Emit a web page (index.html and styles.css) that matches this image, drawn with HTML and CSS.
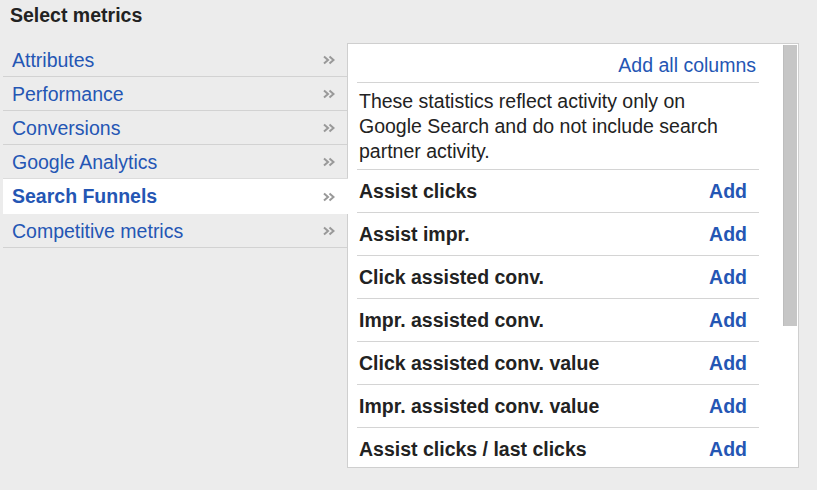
FILE: index.html
```html
<!DOCTYPE html>
<html>
<head>
<meta charset="utf-8">
<link rel="stylesheet" href="styles.css">
</head>
<body>
<div class="title">Select metrics</div>
<div class="main">
  <ul class="nav">
    <li class="nav-item"><span class="nav-label">Attributes</span><svg class="chev" width="12" height="10" viewBox="0 0 12 10"><path d="M1 1.5L5 5L1 8.5M6.5 1.5L10.5 5L6.5 8.5"/></svg></li>
    <li class="nav-item"><span class="nav-label">Performance</span><svg class="chev" width="12" height="10" viewBox="0 0 12 10"><path d="M1 1.5L5 5L1 8.5M6.5 1.5L10.5 5L6.5 8.5"/></svg></li>
    <li class="nav-item"><span class="nav-label">Conversions</span><svg class="chev" width="12" height="10" viewBox="0 0 12 10"><path d="M1 1.5L5 5L1 8.5M6.5 1.5L10.5 5L6.5 8.5"/></svg></li>
    <li class="nav-item"><span class="nav-label">Google Analytics</span><svg class="chev" width="12" height="10" viewBox="0 0 12 10"><path d="M1 1.5L5 5L1 8.5M6.5 1.5L10.5 5L6.5 8.5"/></svg></li>
    <li class="nav-item selected"><span class="nav-label">Search Funnels</span><svg class="chev" width="12" height="10" viewBox="0 0 12 10"><path d="M1 1.5L5 5L1 8.5M6.5 1.5L10.5 5L6.5 8.5"/></svg></li>
    <li class="nav-item"><span class="nav-label">Competitive metrics</span><svg class="chev" width="12" height="10" viewBox="0 0 12 10"><path d="M1 1.5L5 5L1 8.5M6.5 1.5L10.5 5L6.5 8.5"/></svg></li>
  </ul>
  <div class="panel">
    <div class="content">
      <div class="add-all"><span class="link">Add all columns</span></div>
      <div class="desc">These statistics reflect activity only on Google Search and do not include search partner activity.</div>
      <div class="row"><span class="metric">Assist clicks</span><span class="add">Add</span></div>
      <div class="row"><span class="metric">Assist impr.</span><span class="add">Add</span></div>
      <div class="row"><span class="metric">Click assisted conv.</span><span class="add">Add</span></div>
      <div class="row"><span class="metric">Impr. assisted conv.</span><span class="add">Add</span></div>
      <div class="row"><span class="metric">Click assisted conv. value</span><span class="add">Add</span></div>
      <div class="row"><span class="metric">Impr. assisted conv. value</span><span class="add">Add</span></div>
      <div class="row"><span class="metric">Assist clicks / last clicks</span><span class="add">Add</span></div>
    </div>
    <div class="scrollbar"><div class="thumb"></div></div>
  </div>
</div>
</body>
</html>
```
FILE: styles.css
```css
html, body {
  margin: 0;
  padding: 0;
}
body {
  background: #ececec;
  font-family: "Liberation Sans", Arial, sans-serif;
  font-size: 19.5px;
  line-height: 25px;
  color: #222;
  width: 817px;
  height: 490px;
  overflow: hidden;
}
.title {
  font-weight: bold;
  padding: 3px 0 0 10px;
  height: 25px;
  margin-bottom: 15px;
  color: #222;
}
.main {
  display: flex;
  align-items: flex-start;
  padding-left: 3px;
}
.nav {
  list-style: none;
  margin: 0;
  padding: 0;
  width: 344px;
  position: relative;
  z-index: 1;
}
.nav-item {
  display: flex;
  align-items: center;
  justify-content: space-between;
  height: 32px;
  border-bottom: 1px solid #d2d2d2;
  padding: 1px 12px 0 9px;
  color: #2456b4;
}
.nav-item.selected {
  background: #fff;
  border-top: 1px solid #dcdcdc;
  border-bottom: 1px solid #fff;
  margin-top: -1px;
  margin-right: -1px;
  padding-right: 13px;
  height: 33px;
  font-weight: bold;
}
.chev {
  flex: none;
  fill: none;
  stroke: #999;
  stroke-width: 2;
}
.panel {
  display: flex;
  width: 450px;
  height: 423px;
  background: #fff;
  border: 1px solid #cfcfcf;
  overflow: hidden;
}
.content {
  margin-left: 9px;
  width: 402px;
  flex: none;
}
.add-all {
  display: flex;
  justify-content: flex-end;
  padding: 9px 3px 4px 0;
  border-bottom: 1px solid #d4d4d4;
}
.link {
  color: #2456b4;
}
.desc {
  padding: 6px 30px 5px 2px;
  border-bottom: 1px solid #d4d4d4;
  color: #222;
}
.row {
  display: flex;
  align-items: center;
  justify-content: space-between;
  height: 42px;
  border-bottom: 1px solid #d4d4d4;
  padding: 0 12px 0 2px;
  font-weight: bold;
}
.metric {
  color: #222;
}
.add {
  color: #2456b4;
}
.scrollbar {
  margin-left: 24px;
  width: 14px;
  flex: none;
}
.thumb {
  margin-top: 1px;
  height: 281px;
  background: #c6c6c6;
  border-left: 1px solid #bdbdbd;
  box-sizing: border-box;
}
```
